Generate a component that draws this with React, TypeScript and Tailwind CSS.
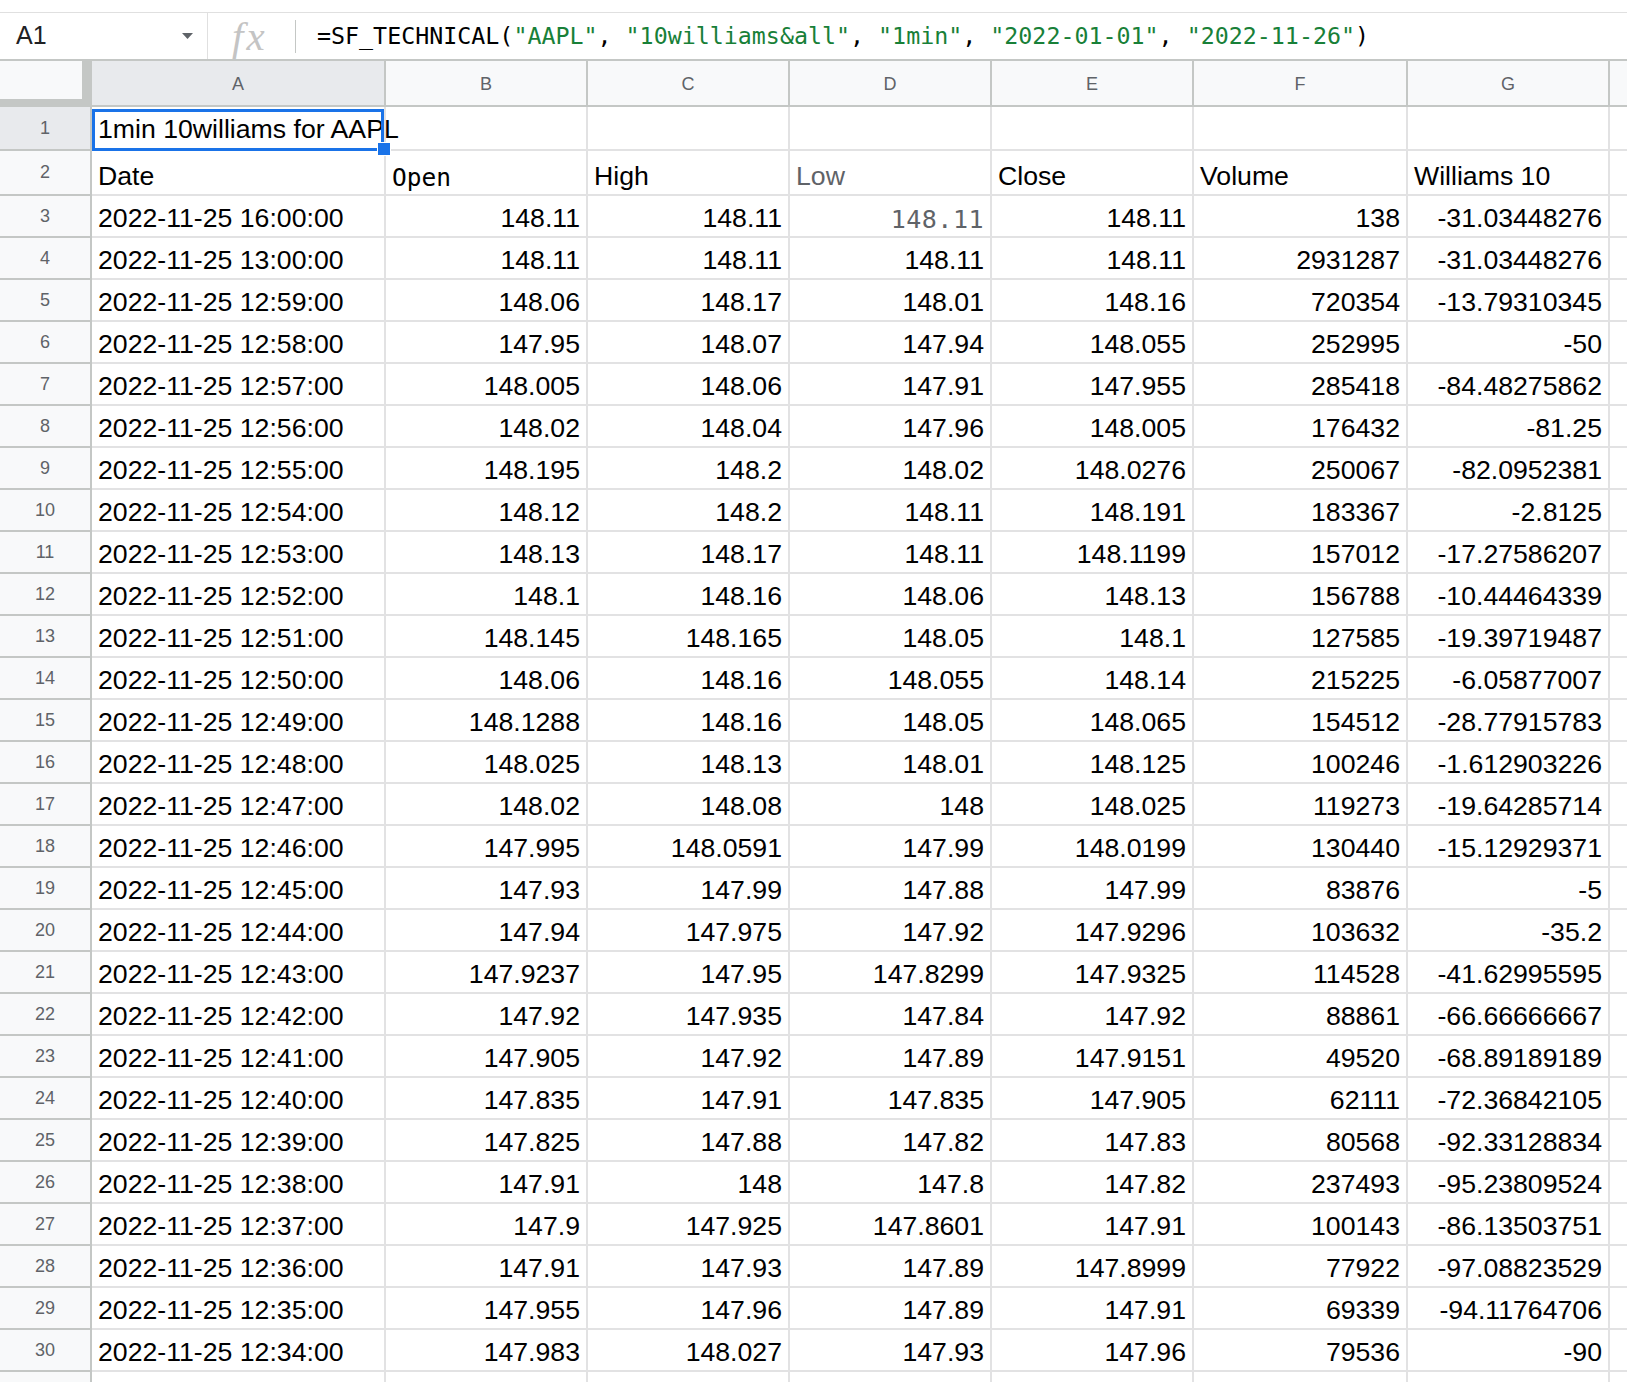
import React from "react";

const letters = ["A", "B", "C", "D", "E", "F", "G"];

const colWidths = [
  "w-[294px]",
  "w-[202px]",
  "w-[202px]",
  "w-[202px]",
  "w-[202px]",
  "w-[214px]",
  "w-[202px]",
];

const data: string[][] = [
  ["2022-11-25 16:00:00", "148.11", "148.11", "148.11", "148.11", "138", "-31.03448276"],
  ["2022-11-25 13:00:00", "148.11", "148.11", "148.11", "148.11", "2931287", "-31.03448276"],
  ["2022-11-25 12:59:00", "148.06", "148.17", "148.01", "148.16", "720354", "-13.79310345"],
  ["2022-11-25 12:58:00", "147.95", "148.07", "147.94", "148.055", "252995", "-50"],
  ["2022-11-25 12:57:00", "148.005", "148.06", "147.91", "147.955", "285418", "-84.48275862"],
  ["2022-11-25 12:56:00", "148.02", "148.04", "147.96", "148.005", "176432", "-81.25"],
  ["2022-11-25 12:55:00", "148.195", "148.2", "148.02", "148.0276", "250067", "-82.0952381"],
  ["2022-11-25 12:54:00", "148.12", "148.2", "148.11", "148.191", "183367", "-2.8125"],
  ["2022-11-25 12:53:00", "148.13", "148.17", "148.11", "148.1199", "157012", "-17.27586207"],
  ["2022-11-25 12:52:00", "148.1", "148.16", "148.06", "148.13", "156788", "-10.44464339"],
  ["2022-11-25 12:51:00", "148.145", "148.165", "148.05", "148.1", "127585", "-19.39719487"],
  ["2022-11-25 12:50:00", "148.06", "148.16", "148.055", "148.14", "215225", "-6.05877007"],
  ["2022-11-25 12:49:00", "148.1288", "148.16", "148.05", "148.065", "154512", "-28.77915783"],
  ["2022-11-25 12:48:00", "148.025", "148.13", "148.01", "148.125", "100246", "-1.612903226"],
  ["2022-11-25 12:47:00", "148.02", "148.08", "148", "148.025", "119273", "-19.64285714"],
  ["2022-11-25 12:46:00", "147.995", "148.0591", "147.99", "148.0199", "130440", "-15.12929371"],
  ["2022-11-25 12:45:00", "147.93", "147.99", "147.88", "147.99", "83876", "-5"],
  ["2022-11-25 12:44:00", "147.94", "147.975", "147.92", "147.9296", "103632", "-35.2"],
  ["2022-11-25 12:43:00", "147.9237", "147.95", "147.8299", "147.9325", "114528", "-41.62995595"],
  ["2022-11-25 12:42:00", "147.92", "147.935", "147.84", "147.92", "88861", "-66.66666667"],
  ["2022-11-25 12:41:00", "147.905", "147.92", "147.89", "147.9151", "49520", "-68.89189189"],
  ["2022-11-25 12:40:00", "147.835", "147.91", "147.835", "147.905", "62111", "-72.36842105"],
  ["2022-11-25 12:39:00", "147.825", "147.88", "147.82", "147.83", "80568", "-92.33128834"],
  ["2022-11-25 12:38:00", "147.91", "148", "147.8", "147.82", "237493", "-95.23809524"],
  ["2022-11-25 12:37:00", "147.9", "147.925", "147.8601", "147.91", "100143", "-86.13503751"],
  ["2022-11-25 12:36:00", "147.91", "147.93", "147.89", "147.8999", "77922", "-97.08823529"],
  ["2022-11-25 12:35:00", "147.955", "147.96", "147.89", "147.91", "69339", "-94.11764706"],
  ["2022-11-25 12:34:00", "147.983", "148.027", "147.93", "147.96", "79536", "-90"],
];

const mono = "font-['DejaVu_Sans_Mono','Liberation_Mono',monospace]";

const RowHeader = ({ n, selected }: { n?: number; selected?: boolean }) => (
  <div
    className={`w-[92px] shrink-0 flex items-center justify-center border-r-2 border-b-2 border-[#c4c7c5] text-[18px] text-[#5f6368] ${
      selected ? "bg-[#e8eaed]" : "bg-[#f8f9fa]"
    }`}
  >
    {n}
  </div>
);

const FormulaBar = () => (
  <div className="flex h-[47px] items-center border-t border-[#e0e0e0]">
    <div className="flex h-full w-[207px] shrink-0 items-center justify-between pl-[16px] pr-[14px]">
      <span className="text-[25px] text-[#202124]">A1</span>
      <svg width="11" height="6" viewBox="0 0 11 6">
        <path d="M0 0 L11 0 L5.5 6 Z" fill="#5f6368" />
      </svg>
    </div>
    <div className="h-full w-px bg-[#e0e0e0]" />
    <div className="flex h-full w-[87px] shrink-0 items-center pl-[24px]">
      <span className="font-['Liberation_Serif',serif] text-[41px] italic leading-none tracking-[3px] text-[#c4c4c4]">
        fx
      </span>
    </div>
    <div className="h-[33px] w-px bg-[#c4c7c5]" />
    <div className={`pl-[21px] text-[23.3px] text-black ${mono}`}>
      =SF_TECHNICAL(<span className="text-[#188038]">"AAPL"</span>,{" "}
      <span className="text-[#188038]">"10williams&amp;all"</span>,{" "}
      <span className="text-[#188038]">"1min"</span>,{" "}
      <span className="text-[#188038]">"2022-01-01"</span>,{" "}
      <span className="text-[#188038]">"2022-11-26"</span>)
    </div>
  </div>
);

const ColumnHeaders = () => (
  <div className="flex h-[48px] border-t-2 border-b-2 border-[#c4c7c5] bg-[#f8f9fa]">
    <div className="w-[92px] shrink-0 bg-[#c4c7c5]">
      <div className="h-[38px] w-[82px] bg-[#f8f9fa]" />
    </div>
    {letters.map((l, i) => (
      <div
        key={l}
        className={`${colWidths[i]} shrink-0 flex items-center justify-center pt-[2px] border-r-2 border-[#c4c7c5] text-[18px] text-[#5f6368] ${
          i === 0 ? "bg-[#e8eaed]" : ""
        }`}
      >
        {l}
      </div>
    ))}
    <div className="flex-1" />
  </div>
);

const cellBase =
  "shrink-0 flex items-end border-r-2 border-b-2 border-[#e2e2e3] leading-none whitespace-nowrap";

export default function App() {
  const heads = ["Date", "Open", "High", "Low", "Close", "Volume", "Williams 10"];

  return (
    <div className="relative h-[1382px] w-full overflow-hidden bg-white font-['Liberation_Sans',Arial,sans-serif] text-black">
      <div className="h-[12px]" />
      <FormulaBar />
      <ColumnHeaders />

      {/* row 1 */}
      <div className="flex h-[44px]">
        <RowHeader n={1} selected />
        <div className={`${colWidths[0]} ${cellBase} relative z-10 overflow-visible pb-[6px] pl-[6px] text-[26.67px]`}>
          1min 10williams for AAPL
        </div>
        {colWidths.slice(1).map((w, i) => (
          <div key={i} className={`${w} ${cellBase}`} />
        ))}
        <div className="flex-1 border-b-2 border-[#e2e2e3]" />
      </div>

      {/* row 2 */}
      <div className="flex h-[45px]">
        <RowHeader n={2} />
        {heads.map((h, i) => (
          <div
            key={h}
            className={`${colWidths[i]} ${cellBase} pb-[4px] pl-[6px] ${
              i === 1
                ? `${mono} text-[24.5px]`
                : i === 3
                ? "text-[26.67px] text-[#5f6368]"
                : "text-[26.67px]"
            }`}
          >
            {h}
          </div>
        ))}
        <div className="flex-1 border-b-2 border-[#e2e2e3]" />
      </div>

      {data.map((row, r) => (
        <div key={r} className="flex h-[42px]">
          <RowHeader n={r + 3} />
          {row.map((v, i) => (
            <div
              key={i}
              className={`${colWidths[i]} ${cellBase} pb-[4px] ${
                i === 0 ? "justify-start pl-[6px]" : "justify-end pr-[6px]"
              } ${
                r === 0 && i === 3
                  ? `${mono} text-[25px] tracking-[0.5px] text-[#5f6368]`
                  : "text-[26.67px]"
              }`}
            >
              {v}
            </div>
          ))}
          <div className="flex-1 border-b-2 border-[#e2e2e3]" />
        </div>
      ))}

      <div className="flex h-[42px]">
        <RowHeader />
        {colWidths.map((w, i) => (
          <div key={i} className={`${w} ${cellBase}`} />
        ))}
        <div className="flex-1 border-b-2 border-[#e2e2e3]" />
      </div>

      {/* selection */}
      <div className="pointer-events-none absolute left-[92px] top-[109px] z-20 h-[42px] w-[292px] border-[3px] border-[#1a73e8]" />
      <div className="pointer-events-none absolute left-[377px] top-[142px] z-20 h-[14px] w-[14px] border border-white bg-[#1a73e8]" />
    </div>
  );
}
